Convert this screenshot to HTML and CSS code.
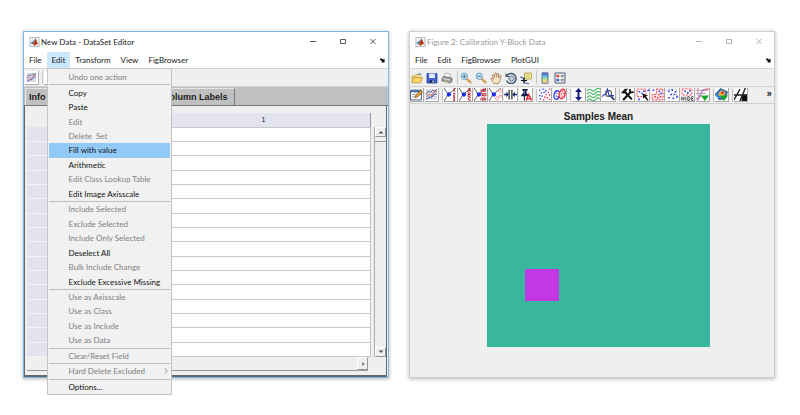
FILE: index.html
```html
<!DOCTYPE html>
<html lang="en">
<head>
<meta charset="utf-8">
<title>DataSet Editor</title>
<link rel="stylesheet" href="styles.css">
</head>
<body>
<svg class="defs" aria-hidden="true">
  <symbol id="matlab" viewBox="0 0 12 12">
    <rect x=".5" y=".5" width="11" height="11" fill="#eef1f6" stroke="#a9b3c2"/>
    <path d="M1 7l3-1.6L6.4 3 5.8 7 3.6 8.6z" fill="#3c78b4"/>
    <path d="M3.6 8.6L5.6 6 7 1.8 8 3.6l3 5.6-2-.8L6 10.6z" fill="#d9541e"/>
    <path d="M7 1.8L8 3.6l.6 3.8L6 10.6l.8-4z" fill="#8c2411"/>
  </symbol>
  <symbol id="dock" viewBox="0 0 6 6">
    <path d="M0 .5h2.200l1.300 1.400L5.500 1v4.500H1.500l1-1.300L0 2z" fill="#111"/>
  </symbol>
  <symbol id="curves" viewBox="0 0 12 12">
    <path d="M1 1h10v10H1z" fill="#e9ebf4"/>
    <path d="M1 2h10M1 4h10M1 6h10M1 8h10M1 10h10" stroke="#b8bfd4" stroke-width=".6"/>
    <path d="M1 6l2-3 2 1 2-2 2 1 2-2" fill="none" stroke="#4d5678" stroke-width=".9"/>
    <path d="M1 8l3-2 2 1 2-3 3-1" fill="none" stroke="#c8605e" stroke-width=".9"/>
    <path d="M1 10.500l3-2 2 0 3-3 2 0" fill="none" stroke="#4658a8"/>
  </symbol>
  <symbol id="lens" viewBox="0 0 12 12">
    <path d="M7 7l3.500 3.500" stroke="#d89a48" stroke-width="2.200" stroke-linecap="round"/>
    <circle cx="4.300" cy="4.300" r="3.200" fill="#bfe4f6" stroke="#6d9fc8"/>
  </symbol>
  <symbol id="branch" viewBox="0 0 12 12">
    <path d="M0 0l4 6-4 6M4 6l7-6" fill="none" stroke="#444" stroke-width=".8"/>
    <circle cx="4.500" cy="6" r="2" fill="#1c2cf0"/>
  </symbol>
</svg>

<main class="desktop">
  <section class="window window-active">
    <header class="titlebar">
      <svg class="logo"><use href="#matlab"/></svg>
      <h1 class="title">New Data - DataSet Editor</h1>
      <button class="win-btn" aria-label="Minimize"><svg viewBox="0 0 8 8"><path d="M1 3.500h6"/></svg></button>
      <button class="win-btn" aria-label="Maximize"><svg viewBox="0 0 8 8"><path d="M1.500 1.500h5v4h-5z"/></svg></button>
      <button class="win-btn" aria-label="Close"><svg viewBox="0 0 8 8"><path d="M1.500 1l5 5M6.500 1l-5 5"/></svg></button>
    </header>
    <nav class="menubar">
      <button>File</button>
      <div class="menu-holder">
        <button class="open">Edit</button>
        <div class="menu">
          <button disabled>Undo one action</button>
          <hr>
          <button>Copy</button>
          <button>Paste</button>
          <button disabled>Edit</button>
          <button disabled>Delete&nbsp; Set</button>
          <button class="hover">Fill with value</button>
          <button>Arithmetic</button>
          <button disabled>Edit Class Lookup Table</button>
          <button>Edit Image Axisscale</button>
          <hr>
          <button disabled>Include Selected</button>
          <button disabled>Exclude Selected</button>
          <button disabled>Include Only Selected</button>
          <button>Deselect All</button>
          <button disabled>Bulk Include Change</button>
          <button>Exclude Excessive Missing</button>
          <hr>
          <button disabled>Use as Axisscale</button>
          <button disabled>Use as Class</button>
          <button disabled>Use as Include</button>
          <button disabled>Use as Data</button>
          <hr>
          <button disabled>Clear/Reset Field</button>
          <hr>
          <button disabled>Hard Delete Excluded<svg class="sub" viewBox="0 0 4 6"><path d="M1 .5L3 3 1 5.500"/></svg></button>
          <hr>
          <button>Options...</button>
        </div>
      </div>
      <button>Transform</button>
      <button>View</button>
      <button>FigBrowser</button>
      <svg class="dock"><use href="#dock"/></svg>
    </nav>
    <div class="toolbar toolbar-editor">
      <button class="tool raised" aria-label="Plot"><svg><use href="#curves"/></svg></button>
      <span class="sep"></span>
      <button class="tool raised" aria-label="Load"></button>
    </div>
    <div class="tabs">
      <button class="tab tab-info">Info</button>
      <button class="tab">Column Labels</button>
    </div>
    <div class="panel">
      <div class="grid-area">
        <table class="data">
          <thead><tr><th class="row-head"></th><th>1</th></tr></thead>
          <tbody>
            <tr><th></th><td></td></tr><tr><th></th><td></td></tr>
            <tr><th></th><td></td></tr><tr><th></th><td></td></tr>
            <tr><th></th><td></td></tr><tr><th></th><td></td></tr>
            <tr><th></th><td></td></tr><tr><th></th><td></td></tr>
            <tr><th></th><td></td></tr><tr><th></th><td></td></tr>
            <tr><th></th><td></td></tr><tr><th></th><td></td></tr>
            <tr><th></th><td></td></tr><tr><th></th><td></td></tr>
            <tr><th></th><td></td></tr><tr><th></th><td></td></tr>
          </tbody>
        </table>
        <div class="vscroll">
          <button class="scroll-btn" aria-label="Up"><svg viewBox="0 0 6 4"><path d="M.5 3.500L3 1l2.500 2.500z"/></svg></button>
          <span class="thumb"></span>
          <button class="scroll-btn" aria-label="Down"><svg viewBox="0 0 6 4"><path d="M.5.500h5L3 3z"/></svg></button>
        </div>
      </div>
      <div class="hscroll">
        <button class="scroll-btn" aria-label="Right"><svg viewBox="0 0 6 6"><path d="M2 1l3 2-3 2z"/></svg></button>
      </div>
    </div>
  </section>

  <section class="window window-idle">
    <header class="titlebar">
      <svg class="logo"><use href="#matlab"/></svg>
      <h2 class="title">Figure 2: Calibration Y-Block Data</h2>
      <button class="win-btn" aria-label="Minimize"><svg viewBox="0 0 8 8"><path d="M1 3.500h6"/></svg></button>
      <button class="win-btn" aria-label="Maximize"><svg viewBox="0 0 8 8"><path d="M1.500 1.500h5v4h-5z"/></svg></button>
      <button class="win-btn" aria-label="Close"><svg viewBox="0 0 8 8"><path d="M1.500 1l5 5M6.500 1l-5 5"/></svg></button>
    </header>
    <nav class="menubar">
      <button>File</button>
      <button>Edit</button>
      <button>FigBrowser</button>
      <button>PlotGUI</button>
      <svg class="dock"><use href="#dock"/></svg>
    </nav>
    <div class="toolbar">
      <button class="tool" aria-label="Open"><svg viewBox="0 0 12 12"><path d="M1 10.500V4h3l1-1.500h4V4" fill="#f6d98a" stroke="#c79a34" stroke-width=".8"/><path d="M1 10.800L2.800 5.500h8.700l-2 5.300z" fill="#fbd56c" stroke="#c4952c" stroke-width=".8"/><path d="M7 2.500q2-2 3.500 0" fill="none" stroke="#4a86b8"/></svg></button>
      <button class="tool" aria-label="Save"><svg viewBox="0 0 12 12"><path d="M1 1.500h9.500l.5.500v9H1z" fill="#4062d2" stroke="#2a3c9a" stroke-width=".8"/><path d="M3 1.500h6v4.500H3z" fill="#dfe8fb"/><path d="M3.500 8h5v3h-5z" fill="#1f2c78"/><path d="M6.500 8.500h1.200v2H6.500z" fill="#fff"/></svg></button>
      <button class="tool" aria-label="Print"><svg viewBox="0 0 12 12"><path d="M3 5L4.500 1l5 1-1.500 4z" fill="#fff" stroke="#999" stroke-width=".7"/><path d="M1 6l2-1.500 8 1.500v3.500L8.500 11 1 9z" fill="#999ea4" stroke="#62676c" stroke-width=".8"/><path d="M3 9.500l4 1" stroke="#e4d46a"/><path d="M2 6.500l7 1.500" stroke="#ddd"/></svg></button>
      <span class="sep"></span>
      <button class="tool" aria-label="Zoom In"><svg viewBox="0 0 12 12"><use href="#lens"/><path d="M2.500 4.300h3.600M4.300 2.500v3.600" stroke="#357" stroke-width=".8"/></svg></button>
      <button class="tool" aria-label="Zoom Out"><svg viewBox="0 0 12 12"><use href="#lens"/><path d="M2.500 4.300h3.600" stroke="#357" stroke-width=".8"/></svg></button>
      <button class="tool" aria-label="Pan"><svg viewBox="0 0 12 12"><path d="M4 11.500L.8 7q-.3-1.500 1.500-.7l1 1.200L2.300 3q.5-1.200 1.400 0l.8 2.500L4.600 1.200q.8-1 1.500 0l.4 4L7.400 1.500q1-.8 1.400.3L8.500 6l1.300-2.500q1-.7 1.400.4L10 8.500 8.500 11.500z" fill="#fbe3c0" stroke="#a07c62" stroke-width=".8"/></svg></button>
      <button class="tool" aria-label="Rotate"><svg viewBox="0 0 12 12"><path d="M2.500 3a5 5 0 1 1-1 5.500" fill="none" stroke="#42566f" stroke-width="1.500"/><path d="M.5 1v4h4z" fill="#42566f"/><path d="M4 5l3-1.300L9 5v3l-2.500 1.200L4 8z" fill="#c0cddb" stroke="#42566f" stroke-width=".7"/></svg></button>
      <button class="tool" aria-label="Data Cursor"><svg viewBox="0 0 12 12"><path d="M4.500 1h7v6h-7z" fill="#f6ed98" stroke="#a99b4c" stroke-width=".8"/><path d="M6 3h4M6 5h4" stroke="#a99b4c" stroke-width=".6"/><path d="M0 5q4 0 4 3.500T9 11.500" fill="none" stroke="#3558c8"/><path d="M1 8.500h6M4 5.500v6" stroke="#111" stroke-width="1.200"/></svg></button>
      <span class="sep"></span>
      <button class="tool" aria-label="Colorbar"><svg viewBox="0 0 12 12"><path d="M3 .8h6v10.400H3z" fill="#62c8e4"/><path d="M3 1h6v2.500H3z" fill="#5c7ce0"/><path d="M3 6h6v3H3z" fill="#b4e08c"/><path d="M3 8.500h6v2.500H3z" fill="#f6d878"/><path d="M3 .8h6v10.400H3z" fill="none" stroke="#4c5a84" stroke-width=".8"/></svg></button>
      <button class="tool" aria-label="Legend"><svg viewBox="0 0 12 12"><path d="M1 1h10v10H1z" fill="#fff" stroke="#39456c" stroke-width=".9"/><path d="M2.300 2.800h3v2.500h-3z" fill="#d8403c"/><path d="M2.300 6.800h3v2.500h-3z" fill="#3b62cc"/><path d="M6.500 3.300H10M6.500 4.800H10M6.500 7.300H10M6.500 8.800H10" stroke="#444" stroke-width=".7"/></svg></button>
    </div>
    <div class="toolbar toolbar-plot">
      <button class="tool raised" aria-label="Edit Data"><svg viewBox="0 0 12 12"><path d="M.5 2h10v9H.5z" fill="#fff" stroke="#345" stroke-width=".8"/><path d="M.5 2h10v2H.5z" fill="#456bb0"/><path d="M2 6h3M2 8h2" stroke="#777" stroke-width=".7"/><path d="M4.500 9l1-2.500L10 2l1.800 1.500L7 8.300z" fill="#f0a63c" stroke="#6b4518" stroke-width=".7"/></svg></button>
      <button class="tool raised" aria-label="Plot"><svg><use href="#curves"/></svg></button>
      <span class="sep"></span>
      <button class="tool raised" aria-label="Numbers"><svg viewBox="0 0 12 12"><use href="#branch"/><path d="M8.500 1l1-.5v3M8.300 5h1.700v1l-1.700 1.500H10.300M8.300 9H10l-.7 1.200q2 1.500-1 1.300" fill="none" stroke="#b81c2c" stroke-width=".9"/></svg></button>
      <button class="tool raised" aria-label="Labels"><svg viewBox="0 0 12 12"><use href="#branch"/><path d="M8 3.500L9.500 0 11 3.500M8.500 2.500h2M8.500 4.500h1.500l.5.800-.5.700H8.500zM8.500 6h1.500l.7.800-.7.900H8.500zM11 9q-2.500-.7-2.500 1T11 11.300" fill="none" stroke="#b81c2c" stroke-width=".9"/></svg></button>
      <button class="tool raised" aria-label="Axis"><svg viewBox="0 0 12 12"><use href="#branch"/><path d="M6.500 1v2.500M8 1h1.500v2.300H8zM10.800.5v3M6.500 5h1.300v2.300H6.500M9 5h2v2.300H9zM6.500 9v2.500M8 9h1.500v2.300H8zM10.800 9v2.500" fill="none" stroke="#b81c2c" stroke-width=".9"/></svg></button>
      <button class="tool raised" aria-label="Classes"><svg viewBox="0 0 12 12"><use href="#branch"/><g fill="none" stroke="#ee8b94" stroke-width=".8"><circle cx="10" cy="2.500" r="1.400"/><circle cx="7.500" cy="9.500" r="1.500"/><circle cx="10.500" cy="7.500" r="1.200"/></g></svg></button>
      <button class="tool raised" aria-label="Spacing"><svg viewBox="0 0 12 12"><path d="M4.700 1.500v9M7.300 1.500v9" stroke="#111"/><path d="M0 6h3M9 6h3" stroke="#222b78" stroke-width="1.300"/><path d="M2 3.500L4.500 6 2 8.500zM10 3.500L7.500 6 10 8.500z" fill="#222b78"/></svg></button>
      <button class="tool raised" aria-label="Pin"><svg viewBox="0 0 12 12"><path d="M3 1h5v1l-1 .7v2l2 1.800v1H2v-1l2-1.800v-2L3 2z" fill="#18204e"/><path d="M5 2.500v3" stroke="#6a7ad8"/><path d="M5 7v4.500" stroke="#222"/><path d="M6.500 11.500L9 6l2.500 5.500M7.500 10h3" fill="none" stroke="#e8202c" stroke-width="1.300"/></svg></button>
      <span class="sep"></span>
      <button class="tool raised" aria-label="Scatter"><svg viewBox="0 0 12 12"><path d="M1 2h1.300M4 1h1.300M6.500 2.500h1.300M2.500 4.500h1.300M5 4h1.300M1 7h1.300M3 7.500h1.300M1.500 10h1.300" stroke="#2434ea" stroke-width="1.300"/><path d="M10 1h1.300M9 4h1.300M7 6h1.300M10 6.500h1.300M5.500 8.500h1.300M8 9h1.300M10 10.500h1.300M4.500 11h1.300" stroke="#ef3040" stroke-width="1.300"/></svg></button>
      <button class="tool raised" aria-label="Ellipses"><svg viewBox="0 0 12 12"><ellipse cx="3.500" cy="6.500" rx="2.500" ry="4" fill="none" stroke="#2434ea" stroke-width="1.200" transform="rotate(15 3.500 6.500)"/><path d="M3 5h1M2.500 7.500h1M4 8h1" stroke="#2434ea"/><ellipse cx="8.500" cy="5.500" rx="2.700" ry="4.500" fill="#ffd4dc" stroke="#e52a40" stroke-width="1.200" transform="rotate(15 8.500 5.500)"/><path d="M8 3h1M7.500 5.500h1M9.500 5h1M8 8h1" stroke="#e52a40"/></svg></button>
      <span class="sep"></span>
      <button class="tool raised" aria-label="Y Scale"><svg viewBox="0 0 12 12"><path d="M6 2v8" stroke="#191e80" stroke-width="1.800"/><path d="M6 0l3.200 3.700H2.800zM6 12l3.200-3.700H2.800z" fill="#191e80"/></svg></button>
      <button class="tool raised" aria-label="Spectra"><svg viewBox="0 0 12 12"><path d="M0 3q2-3 4-1t4-.5 4-.5M0 6q2-3 4-1t4-.5 4-.5M0 9q2-3 4-1t4-.5 4-.5M0 12q2-3 4-1t4-.5 4-.5" fill="none" stroke="#46b85c"/></svg></button>
      <button class="tool raised" aria-label="Find Peaks"><svg viewBox="0 0 12 12"><path d="M0 8l2-2 1.500 0L5 1l1.500 6H11" fill="none" stroke="#2837c8"/><circle cx="6" cy="5" r="2.800" fill="none" stroke="#556"/><path d="M8 7.300l3.300 3.700" stroke="#2b356e" stroke-width="1.600"/></svg></button>
      <span class="sep"></span>
      <button class="tool raised" aria-label="Tools"><svg viewBox="0 0 12 12"><path d="M2 11l7.500-8M3 3l7 7.500" stroke="#111" stroke-width="2"/><path d="M0 4.500L3.500.8h3L3 5z" fill="#111"/><path d="M8 3.500l.5-2.700M9.500 4.500l2.200-1" stroke="#111" stroke-width="1.500"/></svg></button>
      <button class="tool raised" aria-label="Select"><svg viewBox="0 0 12 12"><path d="M1 1h8v7H1z" fill="none" stroke="#ef3040" stroke-width=".9" stroke-dasharray="2 1"/><path d="M2.500 3.500h1.500M5 5h1.500M6.500 3H8M10.500 2H12M2 10.500h1.500" stroke="#2434ea" stroke-width="1.400"/><path d="M6 5l5 2-1.800.8L11.500 11l-1 .8L8 8.800 6.800 10z" fill="#111"/></svg></button>
      <button class="tool raised" aria-label="Include"><svg viewBox="0 0 12 12"><path d="M5 1h6v10H1V6h4z" fill="#fff0f0" stroke="#ef3040" stroke-width=".9" stroke-dasharray="2 1"/><path d="M1.500 2H3M7 3h1.500M8.500 5H10" stroke="#2434ea" stroke-width="1.400"/><path d="M3 8h1.500M5.500 9H7M8 8h1.500M6.500 6H8" stroke="#ef3040" stroke-width="1.400"/></svg></button>
      <button class="tool raised" aria-label="Exclude"><svg viewBox="0 0 12 12"><path d="M1 3V1h9v9H8" fill="none" stroke="#a7adc8" stroke-width=".7" stroke-dasharray="2 1"/><path d="M2 3h1.500M5 2h1.500M8 3.500h1.500M4 6h1.500M7 6h1.500M2 9h1.500M6 9.500h1.500M9.500 8H11" stroke="#2434ea" stroke-width="1.500"/></svg></button>
      <button class="tool raised" aria-label="Hide"><svg viewBox="0 0 12 12"><path d="M1 .8h9v5.700H1z" fill="none" stroke="#ef3040" stroke-width=".8" stroke-dasharray="2 1"/><path d="M3 3h1.500M5.500 4.500H7M7.500 2.500H9" stroke="#2434ea" stroke-width="1.400"/><path d="M.7 8v3.500M2.700 8v3.500M.7 9.800h2M4.500 8v3.500M6.300 8v3.500h1.200l.8-1.700L7.500 8zM11.500 8H9.800v3.500h1.700M9.800 9.800h1.500" fill="none" stroke="#333" stroke-width=".8"/></svg></button>
      <button class="tool raised" aria-label="Preprocess"><svg viewBox="0 0 12 12"><path d="M2 0v12M0 2h11M0 5h9" stroke="#c995ac"/><path d="M0 10q4 0 4.500-4T9 1h3" fill="none" stroke="#e05c80"/><path d="M1 11L7 1" stroke="#8a9bd4"/><path d="M4.500 7h7.500L8.200 12z" fill="#16a52c"/></svg></button>
      <span class="sep"></span>
      <button class="tool raised" aria-label="Surface"><svg viewBox="0 0 12 12"><path d="M0 6l5-5.500 6.500 3-1.500 6L4 11z" fill="#3974d8" stroke="#244" stroke-width=".6"/><path d="M3 6l2.500-4 4 2-1 4-3 .5z" fill="#f2c230"/><path d="M5 5l1.500-2 2 1-.7 2z" fill="#e03c22"/><path d="M1 6.500l2 3" stroke="#52d0d0"/><path d="M4.500 7h7.500L8.200 12z" fill="#16a52c"/></svg></button>
      <span class="sep"></span>
      <button class="tool raised" aria-label="Contrast"><svg viewBox="0 0 12 12"><path d="M7 6h5v6H7z" fill="#111"/><path d="M0 11L5.500 1M5.500 12L10.500 0M0 6.500h12" stroke="#222" stroke-width="1.300" fill="none"/></svg></button>
      <button class="more" aria-label="More tools">»</button>
    </div>
    <figure class="plot">
      <figcaption>Samples Mean</figcaption>
      <svg viewBox="0 0 223 223" role="img" aria-label="Samples Mean">
        <rect width="223" height="223" fill="#39b79e"/>
        <rect x="38" y="145" width="34" height="32" fill="#c338e2"/>
      </svg>
    </figure>
  </section>
</main>
</body>
</html>
```
FILE: styles.css
```css
* { box-sizing: border-box; }

body {
  margin: 0;
  background: #fff;
  color: #222;
  font: 8px/14px Lato, "Open Sans", sans-serif;
}

button {
  margin: 0;
  padding: 0;
  border: 0;
  background: none;
  color: inherit;
  font: inherit;
}

.defs { display: none; }

.desktop {
  display: grid;
  grid-template-columns: 1fr 1fr;
  gap: 20px;
  padding: 31px 25px 20px 23px;
}

.window {
  display: flex;
  flex-direction: column;
  border: 1px solid #d0d0d0;
  background: #efefef;
  box-shadow: 0 1px 4px rgba(0, 0, 0, 0.3);
}

.window-active { border-color: #7db9e6; }

.titlebar {
  display: flex;
  align-items: center;
  height: 20px;
  padding-left: 5px;
  background: #fff;
}

.logo { width: 11px; height: 10px; margin-right: 1px; }

.title {
  flex: 1;
  margin: 0;
  font-size: 8px;
  font-weight: 400;
}

.win-btn { width: 30px; height: 20px; }
.win-btn svg { display: block; width: 8px; height: 8px; margin: 0 auto; fill: none; stroke: #555; }

.window-idle .title { color: #999; }
.window-idle .win-btn svg { stroke: #b4b4b4; }

.menubar {
  display: flex;
  align-items: center;
  height: 17px;
  border-bottom: 1px solid #d4d4d4;
  background: #fff;
}

.menubar > button, .menu-holder > button { height: 16px; padding: 0 5px; }
.menubar .open { background: #cce8ff; }
.dock { width: 5px; height: 5px; margin: 0 3px 0 auto; }

.menu-holder { position: relative; height: 16px; }

.menu {
  position: absolute;
  z-index: 1;
  top: 100%;
  left: 0;
  display: flex;
  flex-direction: column;
  width: 125px;
  height: 327px;
  padding: 1px 1px 0;
  border: 1px solid #c4c4c4;
  background: #f1f1f1;
}

.menu button {
  display: flex;
  flex: 1;
  align-items: center;
  justify-content: space-between;
  min-height: 0;
  padding: 0 2px 0 20px;
  color: #111;
  white-space: nowrap;
}

.menu button:disabled { color: #808080; }
.menu .hover { background: #91c9f7; }
.menu hr { flex: none; width: 100%; height: 1px; margin: 0; border: 0; background: #bdbdbd; }
.sub { width: 4px; height: 6px; fill: none; stroke: #999; }

.toolbar {
  display: flex;
  align-items: center;
  gap: 1px;
  height: 18px;
  border-bottom: 1px solid #d0d0d0;
}

.toolbar-plot { height: 17px; }
.toolbar-editor { padding-left: 1px; }

.tool {
  display: grid;
  flex: none;
  place-items: center;
  width: 14px;
  height: 14px;
}

.tool svg { width: 12px; height: 12px; }

.raised {
  border: solid;
  border-width: 0 1px 1px 0;
  border-color: #aaa;
  background: #fff;
}

.raised svg { width: 13px; height: 13px; }
.toolbar-editor .raised svg { width: 11px; height: 11px; }

.sep { flex: none; width: 3px; height: 13px; border-right: 1px solid #c4c4c4; }
.more { margin: 0 2px 4px auto; font-size: 12px; font-weight: 700; }

.tabs {
  display: flex;
  align-items: flex-end;
  height: 19px;
  padding-left: 1px;
  border-bottom: 1px solid #777;
  background: #c0c0c0;
}

.tab {
  height: 17px;
  padding: 0 6px;
  border: 1px solid #e6e6e6;
  border-right-color: #777;
  border-bottom: 0;
  font: bold 9px/16px "Liberation Sans", Arial, sans-serif;
}

.tab-info { width: 131px; padding: 0 3px; text-align: left; }

.panel {
  flex: 1;
  margin-right: 1px;
  padding: 7px 0 0 2px;
  border: solid #666;
  border-width: 0 1px 2px 1px;
}

.grid-area { display: flex; gap: 3px; }

.data {
  flex: 1;
  height: 244px;
  border-collapse: collapse;
  table-layout: fixed;
  font: 7px/9px "Liberation Sans", Arial, sans-serif;
}

.data tr { height: 14px; }
.data th, .data td { padding: 0; border-bottom: 1px solid #c8c8cc; }
.data th { background: #e3e3f0; font-weight: 400; }
.data tbody th { border-bottom-color: #f4f4fa; }
.data td { border-right: 1px solid #c4c4c4; background: #fff; }
.data thead th { border-right: 1px solid #999; }
.data .row-head { width: 130px; border: 0; background: #efefef; }

.vscroll {
  display: flex;
  flex-direction: column;
  width: 12px;
  margin-top: 14px;
  border-left: 1px solid #aaa;
}

.scroll-btn {
  display: grid;
  place-items: center;
  width: 11px;
  height: 10px;
  border: solid;
  border-width: 1px;
  border-color: #fff #999 #999 #fff;
  background: #efefef;
}

.scroll-btn svg { width: 6px; height: 4px; fill: #555; }
.thumb { flex: 1; margin-top: 4px; border-top: 1px solid #999; }

.hscroll {
  display: flex;
  justify-content: flex-end;
  margin-right: 18px;
  border-bottom: 1px solid #999;
}

.hscroll .scroll-btn { height: 13px; }
.hscroll .scroll-btn svg { height: 6px; fill: #888; }

.plot {
  flex: 1;
  margin: 0;
  padding: 6px 52px 30px 65px;
  text-align: center;
}

.plot figcaption {
  font: bold 10px/14px "Liberation Sans", Arial, sans-serif;
}

.plot svg { display: block; width: 100%; max-width: 223px; margin: 0 auto; }
```
